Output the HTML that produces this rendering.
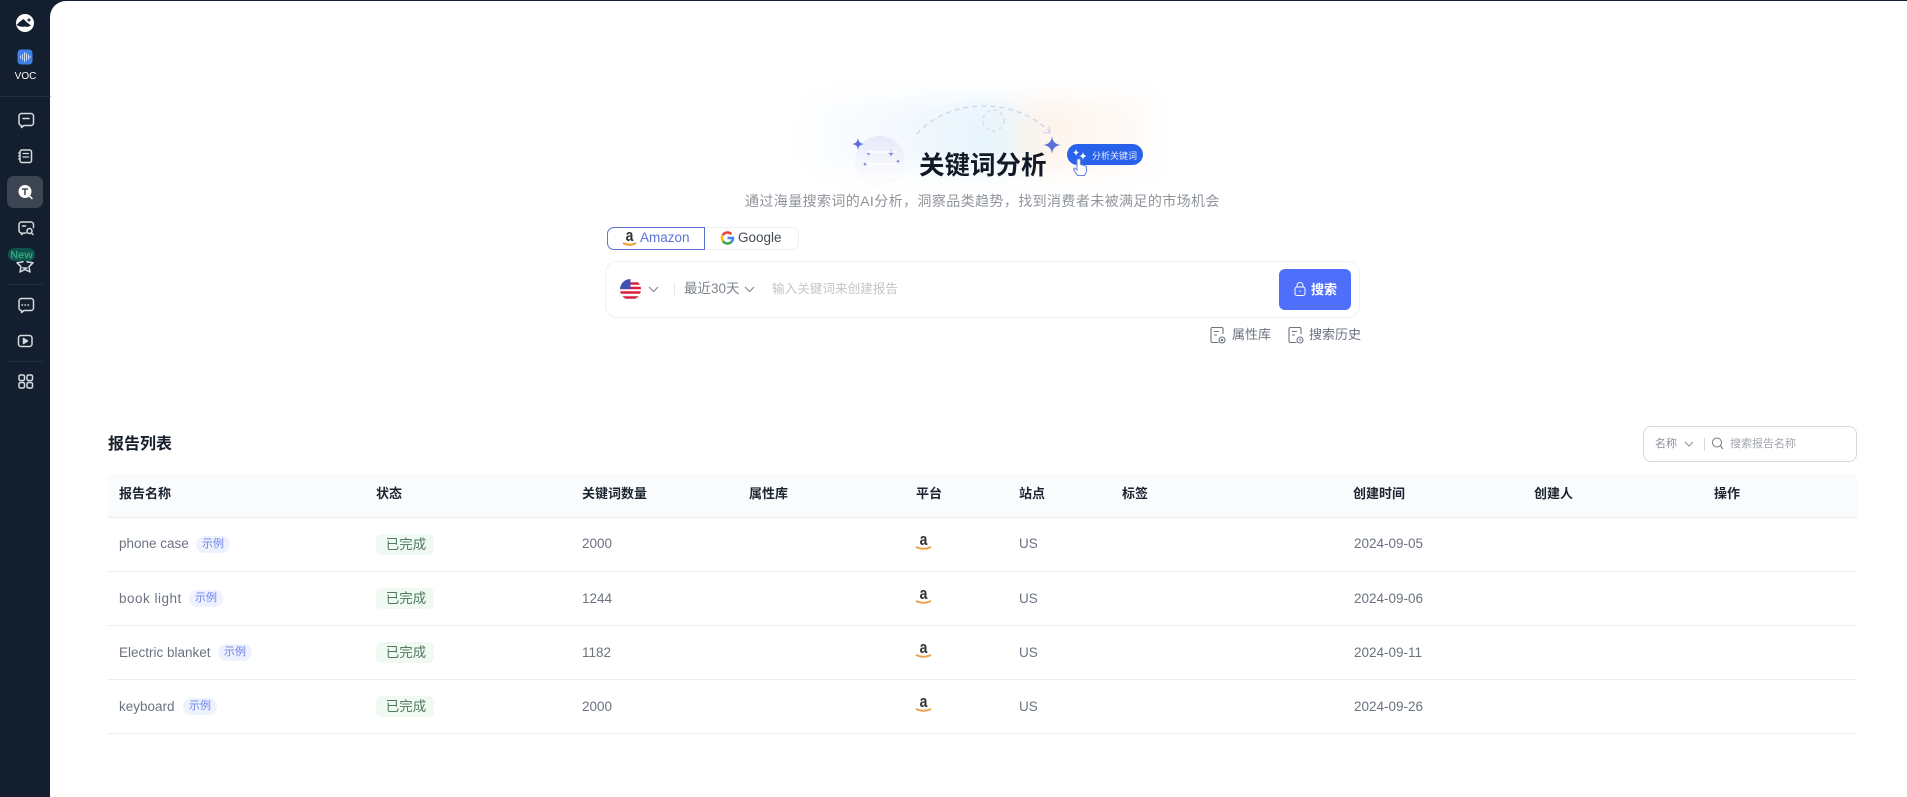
<!DOCTYPE html>
<html lang="zh"><head><meta charset="utf-8"><title>关键词分析</title>
<style>
*{box-sizing:border-box}
html,body{margin:0;padding:0;width:1907px;height:797px;overflow:hidden;background:#131f2f;font-family:"Liberation Sans","Noto Sans CJK SC",sans-serif}
.abs,.t{position:absolute}
.t{white-space:nowrap;line-height:20px}
#main{position:absolute;left:50px;top:1px;width:1857px;height:796px;background:#fff;border-top-left-radius:16px;overflow:hidden}
.hd{font-size:13px;font-weight:700;color:#1c2430;top:484px}
.c{font-size:13.5px;color:#6b7280}
.tag{position:absolute;height:17px;border-radius:9px;background:#eef1fe;color:#6d83ea;font-size:11px;line-height:17px;text-align:center;width:34px}
.ok{position:absolute;left:376px;width:58px;height:21px;background:#f0faf3;border-radius:5px;color:#4f7a5f;font-size:13.5px;line-height:21px;text-align:center;padding-left:2px}
.ln{position:absolute;left:108px;width:1749px;height:1px;background:#eceef1}
svg{position:absolute;overflow:visible}
</style></head><body>
<div id="main">
<div class="abs" style="left:762px;top:98px;width:340px;height:72px;background:linear-gradient(90deg,#fbfdff 0%,#f4f9fe 25%,#ebf6fd 45%,#e6f4fc 54%,#f4f6f6 60%,#fdf3eb 67%,#fef6f0 80%,#fffbf8 100%);filter:blur(12px)"></div>
</div>

<!-- sidebar -->
<svg style="left:0;top:0" width="50" height="400" fill="none" stroke="#d6dade" stroke-width="1.5" stroke-linejoin="round" stroke-linecap="round">
<circle cx="25" cy="23" r="9" fill="#fff" stroke="none"/>
<path d="M16.500 25 L20 21.500 L23.500 19 L27 22.500 L31 25.500 Q28 27.500 25 26.500 Q21 27.500 16.500 25z" fill="#131f2f" stroke="none"/>
<path d="M29 17.500l.7 1.800 1.800.7-1.800.7-.7 1.800-.7-1.800-1.800-.7 1.800-.7z" fill="#131f2f" stroke="none"/>
<rect x="17.500" y="49.500" width="15" height="15" rx="3.500" fill="#3f7fe8" stroke="none"/>
<path d="M20.500 56v2M22.500 54.500v5M24.500 52.500v9M26.500 53.500v7M28.500 55v4M30 56.500v1" stroke="#d9e6fb" stroke-width=".9"/>
<path d="M0 96.500H50" stroke="#222e3d" stroke-width="1"/>
<path d="M21 113.500h10a2.500 2.500 0 0 1 2.500 2.500v7a2.500 2.500 0 0 1-2.500 2.500h-7l-2.500 2v-2a2.500 2.500 0 0 1-2.500-2.500v-7a2.500 2.500 0 0 1 2.500-2.500zM23 118.500h6"/>
<rect x="20" y="150" width="11.500" height="12.500" rx="2"/>
<path d="M23 153.500h5.500M23 157h5.500M18.500 153h1.500M18.500 156h1.500M18.500 159h1.500" stroke-width="1.200"/>
<rect x="7" y="176" width="36" height="32" rx="7" fill="#3e4552" stroke="none"/>
<circle cx="25" cy="191.500" r="6.500" fill="#fff" stroke="none"/>
<path d="M22.500 189h5M25 189v5.500" stroke="#3e4552"/>
<path d="M29.500 196l2.500 2.500" stroke="#fff"/>
<path d="M21 222h10a2.500 2.500 0 0 1 2.500 2.500v3M26 233h-2.500l-2 1.500v-1.500a2.500 2.500 0 0 1-2.500-2.500v-6a2.500 2.500 0 0 1 2.500-2.500M22.500 226h3"/>
<circle cx="29.500" cy="231" r="2.500"/><path d="M31.500 233l1.500 1.500"/>
<path d="M25 257l2.500 5 5.500.8-4 3.900 1 5.300-5-2.600-5 2.600 1-5.300-4-3.900 5.500-.8zM23 268h4"/>
<rect x="8" y="248" width="27" height="13" rx="6.500" fill="#11524a" stroke="none"/>
<text x="21.500" y="258.500" font-size="11" font-weight="700" fill="#2fa37c" stroke="none" text-anchor="middle" font-family="Liberation Sans">New</text>
<path d="M8 284.500H43" stroke="#222e3d" stroke-width="1"/>
<path d="M21 298.500h10a2.500 2.500 0 0 1 2.500 2.500v7a2.500 2.500 0 0 1-2.500 2.500h-7l-2.500 2v-2a2.500 2.500 0 0 1-2.500-2.500v-7a2.500 2.500 0 0 1 2.500-2.500z"/>
<path d="M22 305h.5M25 305h.5M28 305h.5"/>
<rect x="18.500" y="335.500" width="13.500" height="11" rx="2.500"/>
<path d="M23.500 338.500v5l4-2.500z" fill="#d6dade"/>
<path d="M8 361.500H43" stroke="#222e3d" stroke-width="1"/>
<rect x="19" y="375" width="5.500" height="5.500" rx="1.500"/><rect x="27" y="375" width="5.500" height="5.500" rx="1.500"/>
<rect x="19" y="382.500" width="5.500" height="5.500" rx="1.500"/><rect x="27" y="382.500" width="5.500" height="5.500" rx="1.500"/>
</svg>
<div class="t" style="left:0;width:50px;text-align:center;top:67px;font-size:10px;color:#fff;padding-left:1px">VOC</div>

<!-- hero -->
<div class="abs" style="left:855px;top:136px;width:50px;height:50px;border-radius:50%;background:linear-gradient(#e7e8fa,#f5f5fd 50%,#fdfdff)"></div>
<svg style="left:0;top:0" width="1200" height="220" fill="none">
<path d="M917 134C950 97 1015 97 1050 132" stroke="#cfd8ea" stroke-width="1.500" stroke-dasharray="5 4"/>
<path d="M1049 126l1 7-7-.5" stroke="#cfd8ea" stroke-width="1.200"/>
<circle cx="993.500" cy="120.500" r="10.500" stroke="#d5dcea" stroke-width="1.200" stroke-dasharray="4 3"/>
<path d="M858 138Q858.500 143.500 864 144Q858.500 144.500 858 150Q857.500 144.500 852 144Q857.500 143.500 858 138zM891 149Q891.300 152.700 895 153Q891.300 153.300 891 157Q890.700 153.300 887 153Q890.700 152.700 891 149zM1052 136Q1052.700 144.300 1061 145Q1052.700 145.700 1052 154Q1051.300 145.700 1043 145Q1051.300 144.300 1052 136z" fill="#5a6fdd"/>
<path d="M868.500 151.500q.3 2 2.200 2.200q-1.900.3-2.200 2.200q-.3-1.900-2.200-2.200q1.900-.2 2.200-2.200zM865 162q.3 2 2.200 2.200q-1.900.3-2.200 2.200q-.3-1.900-2.200-2.200q1.900-.2 2.200-2.200zM898 159q.3 2 2.200 2.200q-1.900.3-2.200 2.200q-.3-1.900-2.200-2.200q1.900-.2 2.200-2.200z" fill="#8089d8"/>
<path d="M868 152h28M868 164h28M866 176h30" stroke="#fff" stroke-width="2.500" opacity=".8"/>
<rect x="1067" y="144" width="76" height="21" rx="10.500" fill="#2962ea"/>
<path d="M1076 149Q1076.400 152.100 1079 152.500Q1076.400 152.900 1076 156Q1075.600 152.900 1073 152.500Q1075.600 152.100 1076 149zM1083 152Q1083.400 155.600 1087 156Q1083.400 156.400 1083 160Q1082.600 156.400 1079 156Q1082.600 155.600 1083 152z" fill="#fff"/>
<path d="M1077 162v8l-2.500-2-1 1.500 4 6h7l2-4v-5l-3-1.200-3-.8v-4a1.700 1.700 0 0 0-3.500 0z" fill="#fff" stroke="#6f86df" stroke-width="1.100"/>
</svg>
<div class="t" style="left:1092px;top:146px;font-size:9px;color:#e4ebff">分析关键词</div>
<div class="t" style="left:919px;top:151px;font-size:25.500px;line-height:30px;font-weight:700;color:#111a26">关键词分析</div>
<div class="t" style="left:745px;top:191px;font-size:14px;letter-spacing:.4px;color:#8f949b">通过海量搜索词的AI分析，洞察品类趋势，找到消费者未被满足的市场机会</div>

<!-- tabs -->
<div class="abs" style="left:607px;top:227px;width:192px;height:23px;border:1px solid #eff0f2;border-radius:7px"></div>
<div class="abs" style="left:607px;top:227px;width:98px;height:23px;border:1px solid #5b72d9;border-radius:7px 0 0 7px;background:#fff"></div>
<div class="t" style="left:640px;top:228px;font-size:13.500px;color:#5b72d9">Amazon</div>
<div class="t" style="left:738px;top:228px;font-size:13.500px;color:#444b55">Google</div>
<svg style="left:0;top:0" width="800" height="320" fill="none">
<text transform="translate(629.500,241) scale(1,1.200)" font-size="14" font-weight="700" fill="#333" text-anchor="middle" font-family="Liberation Sans">a</text>
<path d="M623 243q6.500 3.500 13 0" stroke="#f09a27" stroke-width="2"/>
<path d="M727.500 238H733a5.500 5.500 0 0 1-1.600 3.900" stroke="#4285f4" stroke-width="2.500"/>
<path d="M731.400 241.900a5.500 5.500 0 0 1-8.600-1" stroke="#34a853" stroke-width="2.500"/>
<path d="M722.800 240.900a5.500 5.500 0 0 1 0-5.800" stroke="#fbbc05" stroke-width="2.500"/>
<path d="M722.800 235.100a5.500 5.500 0 0 1 8.600-1" stroke="#ea4335" stroke-width="2.500"/>
</svg>

<!-- search box -->
<div class="abs" style="left:605px;top:261px;width:755px;height:57px;border:1px solid #eff0f3;border-radius:12px"></div>
<svg style="left:0;top:0" width="800" height="320" fill="none">
<clipPath id="f"><circle cx="630.500" cy="289.500" r="10.500"/></clipPath>
<g clip-path="url(#f)"><rect x="620" y="279" width="21" height="21" fill="#fff"/>
<path d="M620 283.500h21M620 288h21M620 292.500h21M620 297.500h21" stroke="#d8203c" stroke-width="2.600"/>
<rect x="620" y="279" width="10.500" height="10" fill="#3f51b5"/></g>
<path d="M649 287l4.500 4.500 4.500-4.500M745 287l4.500 4.500 4.500-4.500" stroke="#878d96" stroke-width="1.200"/>
<path d="M674.500 282v15" stroke="#e6e8ec"/>
</svg>
<div class="t" style="left:684px;top:279px;font-size:13.500px;color:#7f858d">最近30天</div>
<div class="t" style="left:772px;top:279px;font-size:12.600px;color:#c2c5ca">输入关键词来创建报告</div>
<div class="abs" style="left:1279px;top:269px;width:72px;height:41px;background:#4f6ffa;border-radius:6px"></div>
<svg style="left:1290px;top:279px" width="20" height="20" fill="none" stroke="#fff" stroke-width="1">
<rect x="5" y="8" width="10" height="8.500" rx="2"/><path d="M7 8V6.500a3 3 0 0 1 6 0V8M10 11.500v1.500"/></svg>
<div class="t" style="left:1311px;top:280px;font-size:13px;font-weight:700;color:#fff">搜索</div>

<svg style="left:0;top:0" width="1400" height="350" fill="none" stroke="#6b7280" stroke-width="1.100">
<path d="M1218.500 342.500h-6a1.500 1.500 0 0 1-1.500-1.500v-12a1.500 1.500 0 0 1 1.500-1.500h9a1.500 1.500 0 0 1 1.500 1.500v5M1214 331.500h5M1214 335h3"/>
<circle cx="1222" cy="340" r="3"/><circle cx="1222" cy="340" r=".7"/>
<path d="M1296.500 342.500h-6a1.500 1.500 0 0 1-1.500-1.500v-12a1.500 1.500 0 0 1 1.500-1.500h9a1.500 1.500 0 0 1 1.500 1.500v5M1292 331.500h5M1292 335h3"/>
<circle cx="1300" cy="340" r="3"/><path d="M1300 338.500v1.500l1 .7"/>
</svg>
<div class="t" style="left:1232px;top:325px;font-size:13px;color:#6b7280">属性库</div>
<div class="t" style="left:1309px;top:325px;font-size:13px;color:#6b7280">搜索历史</div>

<!-- list head -->
<div class="t" style="left:108px;top:435px;font-size:16px;font-weight:700;color:#161e2a">报告列表</div>
<div class="abs" style="left:1643px;top:426px;width:214px;height:36px;border:1px solid #d5d8dc;border-radius:8px"></div>
<div class="t" style="left:1655px;top:434px;font-size:11px;color:#8a9099">名称</div>
<svg style="left:0;top:0" width="1900" height="470" fill="none" stroke="#8a9099" stroke-width="1">
<path d="M1685 442l4 4 4-4"/><path d="M1704.500 438v13" stroke="#d5d8dc"/>
<circle cx="1717" cy="442.500" r="4.500" stroke="#70767f"/><path d="M1720.500 446l2.500 3" stroke="#70767f"/>
</svg>
<div class="t" style="left:1730px;top:434px;font-size:11px;color:#a1a6ad">搜索报告名称</div>

<!-- table -->
<div class="abs" style="left:108px;top:474px;width:1749px;height:43px;background:#fafbfc;border-radius:4px 4px 0 0"></div>
<div class="ln" style="top:517px"></div><div class="ln" style="top:571px"></div><div class="ln" style="top:625px"></div><div class="ln" style="top:679px"></div><div class="ln" style="top:733px"></div>
<div class="t hd" style="left:119px">报告名称</div>
<div class="t hd" style="left:376px">状态</div>
<div class="t hd" style="left:582px">关键词数量</div>
<div class="t hd" style="left:749px">属性库</div>
<div class="t hd" style="left:916px">平台</div>
<div class="t hd" style="left:1019px">站点</div>
<div class="t hd" style="left:1122px">标签</div>
<div class="t hd" style="left:1353px">创建时间</div>
<div class="t hd" style="left:1534px">创建人</div>
<div class="t hd" style="left:1714px">操作</div>

<div class="t c" style="left:119px;top:534px">phone case</div><div class="tag" style="left:196px;top:536px">示例</div>
<div class="ok" style="top:534px">已完成</div>
<div class="t c" style="left:582px;top:534px">2000</div><div class="t c" style="left:1019px;top:534px">US</div><div class="t c" style="left:1354px;top:534px">2024-09-05</div>

<div class="t c" style="left:119px;top:589px;letter-spacing:.5px">book light</div><div class="tag" style="left:189px;top:590px">示例</div>
<div class="ok" style="top:588px">已完成</div>
<div class="t c" style="left:582px;top:589px">1244</div><div class="t c" style="left:1019px;top:589px">US</div><div class="t c" style="left:1354px;top:589px">2024-09-06</div>

<div class="t c" style="left:119px;top:643px">Electric blanket</div><div class="tag" style="left:218px;top:644px">示例</div>
<div class="ok" style="top:642px">已完成</div>
<div class="t c" style="left:582px;top:643px">1182</div><div class="t c" style="left:1019px;top:643px">US</div><div class="t c" style="left:1354px;top:643px">2024-09-11</div>

<div class="t c" style="left:119px;top:697px">keyboard</div><div class="tag" style="left:183px;top:698px">示例</div>
<div class="ok" style="top:696px">已完成</div>
<div class="t c" style="left:582px;top:697px">2000</div><div class="t c" style="left:1019px;top:697px">US</div><div class="t c" style="left:1354px;top:697px">2024-09-26</div>

<svg style="left:0;top:0" width="1000" height="760" fill="none" font-family="Liberation Sans" font-size="14" font-weight="700" text-anchor="middle">
<text transform="translate(923.500,545) scale(1,1.200)" fill="#333">a</text><path d="M916 547q7.500 3.500 15 0" stroke="#e8a24c" stroke-width="2"/>
<text transform="translate(923.500,599) scale(1,1.200)" fill="#333">a</text><path d="M916 601q7.500 3.500 15 0" stroke="#e8a24c" stroke-width="2"/>
<text transform="translate(923.500,653) scale(1,1.200)" fill="#333">a</text><path d="M916 655q7.500 3.500 15 0" stroke="#e8a24c" stroke-width="2"/>
<text transform="translate(923.500,707) scale(1,1.200)" fill="#333">a</text><path d="M916 709q7.500 3.500 15 0" stroke="#e8a24c" stroke-width="2"/>
</svg>
</body></html>
